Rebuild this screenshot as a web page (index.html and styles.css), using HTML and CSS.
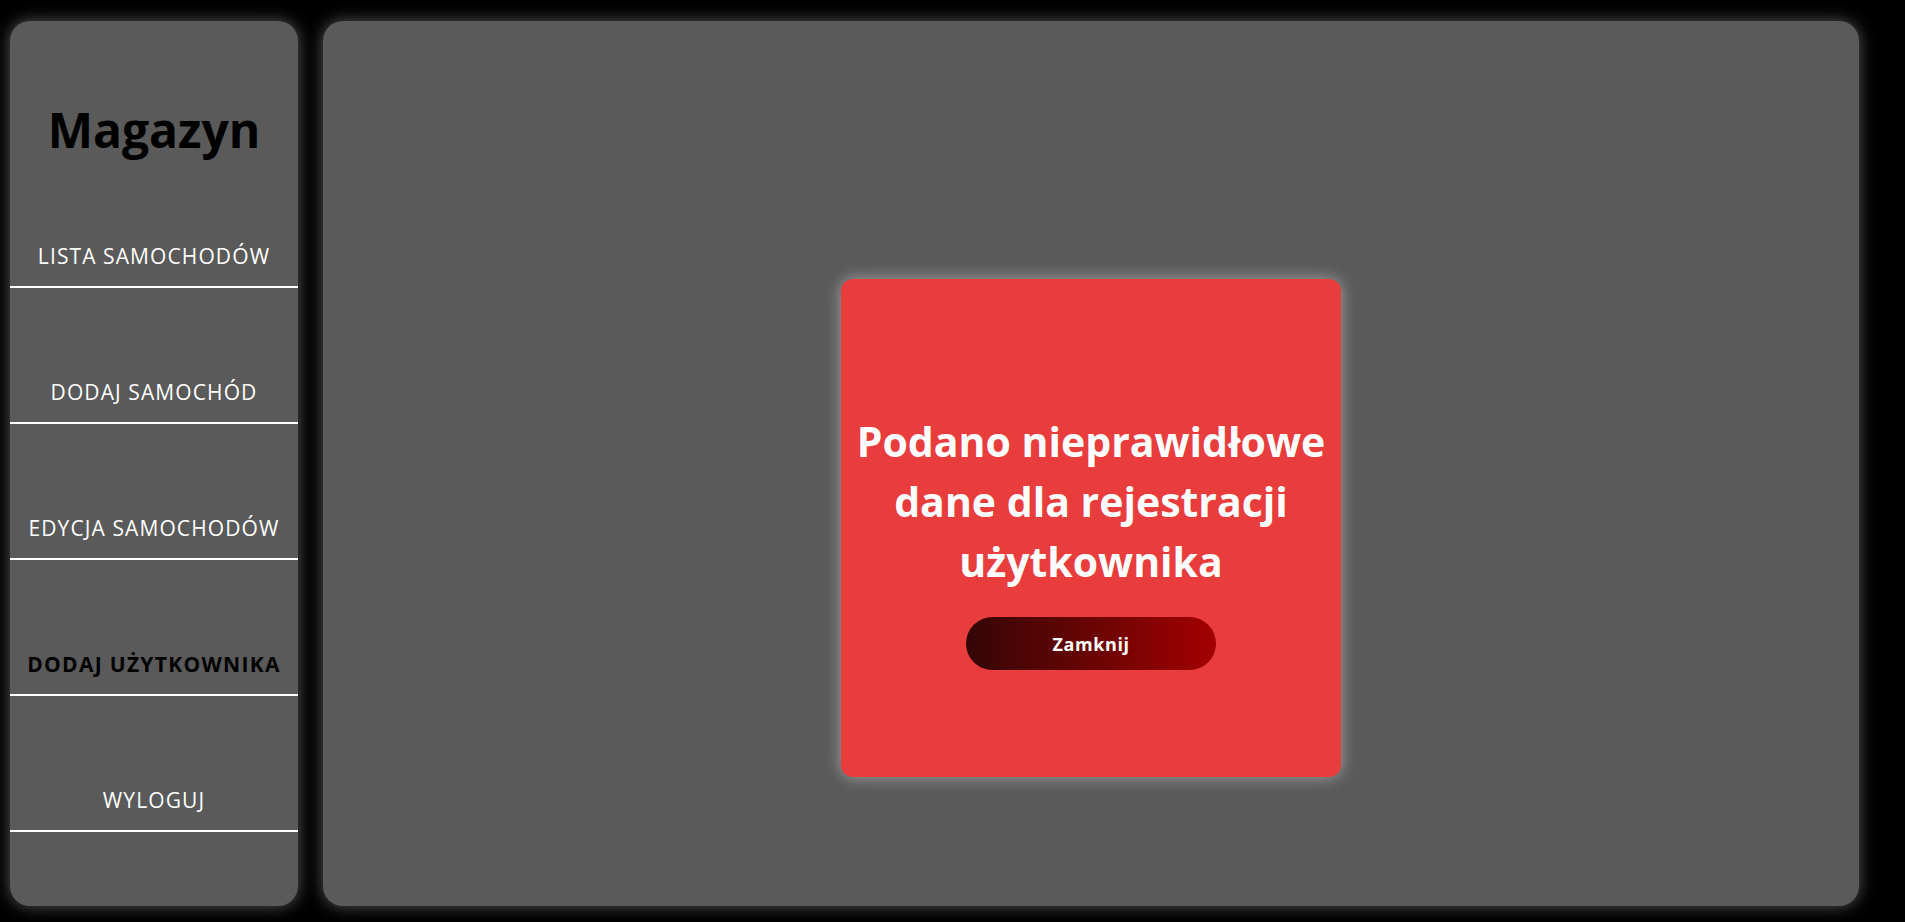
FILE: index.html
```html
<!DOCTYPE html>
<html lang="pl">
<head>
<meta charset="utf-8">
<title>Magazyn</title>
<link rel="stylesheet" href="styles.css">
</head>
<body>
<div class="app">
  <aside class="sidebar">
    <h1 class="title">Magazyn</h1>
    <nav class="nav">
      <a class="nav-item" href="#">LISTA SAMOCHODÓW</a>
      <a class="nav-item" href="#">DODAJ SAMOCHÓD</a>
      <a class="nav-item" href="#">EDYCJA SAMOCHODÓW</a>
      <a class="nav-item active" href="#">DODAJ UŻYTKOWNIKA</a>
      <a class="nav-item" href="#">WYLOGUJ</a>
    </nav>
  </aside>
  <main class="main">
    <div class="modal">
      <p class="modal-text">Podano nieprawidłowe dane dla rejestracji użytkownika</p>
      <button class="modal-btn">Zamknij</button>
    </div>
  </main>
</div>
</body>
</html>
```
FILE: styles.css
```css
* { box-sizing: border-box; }
html, body { margin: 0; padding: 0; }
body {
  background: #000;
  font-family: "Open Sans", "Noto Sans", sans-serif;
  width: 1905px;
  height: 922px;
  overflow: hidden;
}
.app {
  display: flex;
  gap: 25px;
  padding: 21px 0 0 10px;
}
.sidebar {
  width: 288px;
  height: 885px;
  background: #5a5a5a;
  border-radius: 20px;
  box-shadow: 0 0 16px rgba(255,255,255,0.35);
  padding-top: 87px;
}
.title {
  margin: 0;
  text-align: center;
  font-size: 48px;
  line-height: 44px;
  font-weight: 700;
  color: #000;
}
.nav {
  display: flex;
  flex-direction: column;
}
.nav-item {
  display: block;
  padding: 88px 0 14px;
  border-bottom: 2px solid #fff;
  text-align: center;
  color: #fff;
  text-decoration: none;
  font-size: 21px;
  letter-spacing: 1.1px;
  line-height: 32px;
}
.nav-item.active {
  color: #000;
  font-weight: 700;
  letter-spacing: 1.3px;
}
.main {
  position: relative;
  width: 1536px;
  height: 885px;
  background: #5a5a5a;
  border-radius: 20px;
  box-shadow: 0 0 16px rgba(255,255,255,0.35);
}
.modal {
  position: absolute;
  left: 518px;
  top: 258px;
  width: 500px;
  height: 498px;
  background: #e93c3c;
  border-radius: 12px;
  box-shadow: 0 0 16px rgba(255,255,255,0.45);
  display: flex;
  flex-direction: column;
  align-items: center;
  padding: 132px 10px 0;
}
.modal-text {
  margin: 0;
  text-align: center;
  color: #fff;
  font-weight: 700;
  font-size: 41px;
  line-height: 60px;
}
.modal-btn {
  margin-top: 26px;
  width: 250px;
  height: 53px;
  border: none;
  border-radius: 27px;
  background: linear-gradient(90deg, #340606 0%, #6a0404 50%, #a30000 100%);
  color: #fff;
  font-family: inherit;
  font-weight: 700;
  font-size: 18px;
  letter-spacing: 0.6px;
}
```
